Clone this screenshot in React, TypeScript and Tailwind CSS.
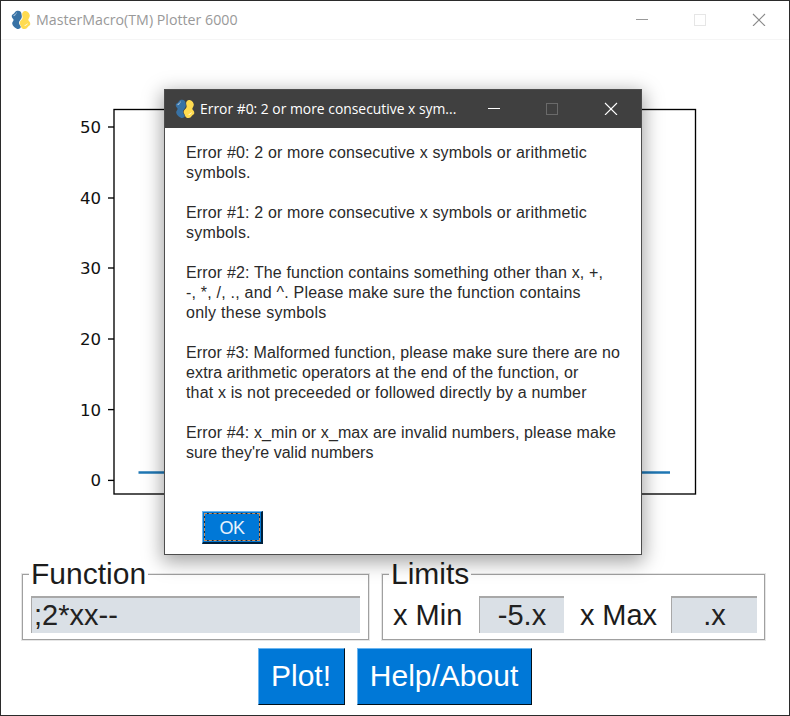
import React from 'react';

const ticks = [
  { label: '50', y: 127 },
  { label: '40', y: 198 },
  { label: '30', y: 268 },
  { label: '20', y: 339 },
  { label: '10', y: 409.6 },
  { label: '0', y: 480.4 },
];

const messages = [
  [
    { text: 'Error #0: 2 or more consecutive x symbols or arithmetic', track: 'tracking-[0.16px]' },
    { text: 'symbols.', track: 'tracking-[0.2px]' },
  ],
  [
    { text: 'Error #1: 2 or more consecutive x symbols or arithmetic', track: 'tracking-[0.16px]' },
    { text: 'symbols.', track: 'tracking-[0.2px]' },
  ],
  [
    { text: 'Error #2: The function contains something other than x, +,', track: 'tracking-[0.15px]' },
    { text: '-, *, /, ., and ^. Please make sure the function contains', track: 'tracking-[0.21px]' },
    { text: 'only these symbols', track: 'tracking-[0.25px]' },
  ],
  [
    { text: 'Error #3: Malformed function, please make sure there are no', track: 'tracking-[0.09px]' },
    { text: 'extra arithmetic operators at the end of the function, or', track: 'tracking-[0.13px]' },
    { text: 'that x is not preceeded or followed directly by a number', track: 'tracking-[0.15px]' },
  ],
  [
    { text: 'Error #4: x_min or x_max are invalid numbers, please make', track: 'tracking-[0.12px]' },
    { text: "sure they're valid numbers", track: 'tracking-[0.01px]' },
  ],
];

function PythonIcon() {
  return (
    <svg viewBox="0 0 20 20" className="h-5 w-5 shrink-0">
      <path
        d="M6 0.8 C8.4 0.2 10.3 1.4 10.4 3.6 C10.6 5.4 11.2 6.4 10.6 8 C10 9.6 8.2 10.6 8 12.6 C7.8 14.6 9.4 15.2 9.8 16.8 C9.8 18.4 8 19.4 6.2 18.9 C4.2 18.2 1.4 15.8 1.2 13.6 C1.1 11.8 2.8 11 2.6 9.8 C2.3 8.6 0.7 8 0.7 6 C0.7 4.4 2.2 4.2 3 3.4 C3.9 2.5 4.2 1.3 6 0.8 Z"
        fill="#3872a5"
      />
      <path
        d="M14 0.9 C16.4 0.8 18.6 3 18.8 5.6 C18.9 7.6 17.3 8.8 17.3 9.8 C17.4 11.2 19.4 11.8 19.3 14 C19.2 15.6 17.9 15.6 17.2 16.6 C16.4 17.8 15.5 18.9 13.6 19.1 C11.6 19.2 10.2 18 9.8 16 C9.3 14.4 8.4 14 8.7 12.4 C9 10.8 11.2 10 11.6 8 C11.8 6.4 11 5.6 11.1 4 C11.3 2.2 12.4 1.1 14 0.9 Z"
        fill="#ffdb50"
      />
      <path d="M2.6 5.6 L4.6 4.6 M4.8 3.4 L5.6 3" stroke="#e4eef6" strokeWidth="0.9" />
      <path d="M13.6 15.6 L15.4 15 L16.4 13.6" stroke="#fffbe8" strokeWidth="0.9" fill="none" />
    </svg>
  );
}

function WindowControls({ line, box, close }: { line: string; box: string; close: string }) {
  return (
    <svg viewBox="0 0 130 13" className="mb-px h-[13px] w-[130px] shrink-0" shapeRendering="crispEdges">
      <path d="M0 6.5 H12" stroke={line} />
      <rect x="58.5" y="1.5" width="11" height="11" fill="none" stroke={box} />
      <path d="M117 1 L129 13 M129 1 L117 13" stroke={close} strokeWidth="1.1" shapeRendering="auto" />
    </svg>
  );
}

function Plot() {
  return (
    <svg viewBox="0 40 788 520" className="block h-[520px] w-[788px]">
      <g transform="translate(-1 0)">
        <rect x="114" y="109.5" width="581.5" height="384.5" fill="none" stroke="#000" strokeWidth="1.35" />
        {ticks.map((t) => (
          <g key={t.label}>
            <path d={`M108 ${t.y} H114`} stroke="#000" strokeWidth="1.35" />
            <text
              x="101"
              y={t.y + 6}
              textAnchor="end"
              className="fill-[#111] font-['DejaVu_Sans',sans-serif] text-[16.6px]"
            >
              {t.label}
            </text>
          </g>
        ))}
        <path d="M138.5 472.6 H670" stroke="#1f77b4" strokeWidth="2.5" />
      </g>
    </svg>
  );
}

function Frame({ title, className, children }: { title: string; className: string; children: React.ReactNode }) {
  return (
    <div className={`relative h-[66px] border border-[#a0a0a0] shadow-[0_0_0_1px_#e6e6e6] ${className}`}>
      <span className="absolute -top-[17px] left-[6px] bg-white pl-[2px] pr-[2px] text-[30px] leading-[32px] text-[#1c1c1c]">
        {title}
      </span>
      {children}
    </div>
  );
}

function Field({ value, className }: { value: string; className: string }) {
  return (
    <div
      className={`h-[37px] border-l border-t-2 border-[#a8a8a8] bg-[#dae0e6] text-[29px] leading-[35px] text-[#222] ${className}`}
    >
      {value}
    </div>
  );
}

function ActionButton({ label, className }: { label: string; className: string }) {
  return (
    <button
      className={`h-[57px] border border-b-[#00101c] border-l-[#6bb5f0] border-r-[#00101c] border-t-[#6bb5f0] bg-[#0078d7] pb-[2px] pr-px text-[30px] leading-none text-white ${className}`}
    >
      {label}
    </button>
  );
}

function ErrorDialog() {
  return (
    <div className="absolute left-[163px] top-[88px] flex h-[466px] w-[478px] flex-col border border-[#4d4d4d] bg-white shadow-[0_5px_18px_2px_rgba(0,0,0,0.36)]">
      <div className="flex h-[38px] shrink-0 items-center bg-[#404040] pl-[10px]">
        <PythonIcon />
        <span className="mb-[2px] ml-[5px] w-[288px] origin-left scale-x-[0.925] whitespace-nowrap font-['Open_Sans',sans-serif] text-[15px] text-white">
          Error #0: 2 or more consecutive x sym...
        </span>
        <WindowControls line="#ffffff" box="#6a6a6a" close="#ffffff" />
      </div>
      <div className="flex flex-col gap-5 pl-[21px] pt-[15px] text-base leading-5 text-[#2a2a2a]">
        {messages.map((lines, i) => (
          <div key={i}>
            {lines.map((l) => (
              <p key={l.text} className={`whitespace-nowrap ${l.track}`}>
                {l.text}
              </p>
            ))}
          </div>
        ))}
      </div>
      <button className="ml-[37px] mt-[48px] flex h-[33px] w-[61px] border border-b-2 border-r-2 border-b-[#00213c] border-l-[#6bb5f0] border-r-[#00213c] border-t-[#6bb5f0] bg-[#0078d7] p-px">
        <span className="flex h-full w-full items-center justify-center border border-dashed border-[#c89060] bg-[#1c2c3c] text-[18px] leading-none tracking-[-0.4px] text-[#e6f2fc]">
          <span className="flex h-full w-full items-center justify-center bg-[#0078d7] pt-px">OK</span>
        </span>
      </button>
    </div>
  );
}

export default function App() {
  return (
    <div className="relative flex h-[716px] w-[790px] flex-col overflow-hidden border border-[#2b2b2b] bg-white font-['Liberation_Sans',Arial,sans-serif]">
      <div className="flex h-[39px] shrink-0 items-center border-b border-[#f5f5f5] pl-[10px]">
        <PythonIcon />
        <span className="mb-[2px] ml-[5px] w-[600px] origin-left scale-x-[0.947] whitespace-nowrap font-['Open_Sans',sans-serif] text-[15px] text-[#999]">
          MasterMacro(TM) Plotter 6000
        </span>
        <WindowControls line="#999999" box="#e6e6e6" close="#8a8a8a" />
      </div>
      <Plot />
      <div className="mt-[14px] flex gap-[13px] pl-[21px]">
        <Frame title="Function" className="w-[347px] pl-[8px] pt-[21px]">
          <Field value=";2*xx--" className="w-[329px] pl-[2px]" />
        </Frame>
        <Frame title="Limits" className="flex w-[383px] pl-[10px] pt-[21px] text-[29px] leading-[39px] text-[#1c1c1c]">
          <span className="w-[86px]">x Min</span>
          <Field value="-5.x" className="w-[85px] text-center" />
          <span className="ml-[16px] w-[91px] tracking-[-0.1px]">x Max</span>
          <Field value=".x" className="w-[86px] text-center" />
        </Frame>
      </div>
      <div className="mt-[8px] flex gap-[12px] pl-[257px]">
        <ActionButton label="Plot!" className="w-[87px]" />
        <ActionButton label="Help/About" className="w-[175px]" />
      </div>
      <ErrorDialog />
    </div>
  );
}
